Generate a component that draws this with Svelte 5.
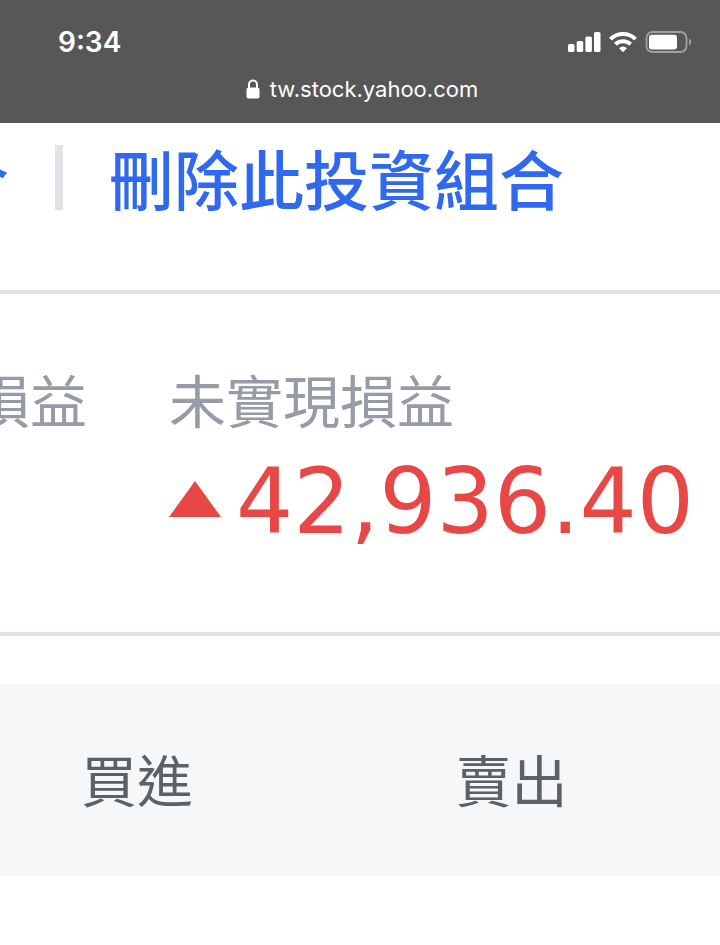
<script lang="ts">
  const time = '9:34';
  const host = 'tw.stock.yahoo.com';
  const unrealized = 42936.4;

  const formatAmount = (value: number): string =>
    value.toLocaleString('en-US', { minimumFractionDigits: 2, maximumFractionDigits: 2 });

  const columns = ['買進', '賣出'];
</script>

<header class="browser-bar">
  <div class="status-row">
    <span class="time">{time}</span>
    <div class="indicators">
      <svg width="34" height="22" viewBox="0 0 34 22" fill="#fff" aria-hidden="true">
        <rect x="1" y="13" width="6.5" height="8" rx="1.6" />
        <rect x="9.7" y="10" width="6.5" height="11" rx="1.6" />
        <rect x="18.4" y="5.5" width="6.5" height="15.5" rx="1.6" />
        <rect x="27" y="1" width="6.5" height="20" rx="1.6" />
      </svg>
      <svg width="28" height="22" viewBox="0 0 28 22" aria-hidden="true">
        <g fill="none" stroke="#fff" stroke-width="4">
          <path d="M1.5 8.1a18 18 0 0 1 25 0" />
          <path d="M6.4 13.2a11 11 0 0 1 15.2 0" />
        </g>
        <path d="M14 21.2l-4-4a5.8 5.8 0 0 1 8 0z" fill="#fff" />
      </svg>
      <svg width="47" height="22" viewBox="0 0 47 22" aria-hidden="true">
        <rect x="1.5" y="1" width="40" height="20" rx="6" fill="none" stroke="#a0a0a0" stroke-width="1.8" />
        <rect x="4" y="3.7" width="28" height="14.8" rx="3" fill="#fff" />
        <path d="M44 7.5c3 1.2 3 5.8 0 7z" fill="#a0a0a0" />
      </svg>
    </div>
  </div>
  <div class="address">
    <svg width="14" height="20" viewBox="0 0 14 20" aria-hidden="true">
      <path d="M3 9V5.5a4 4 0 0 1 8 0V9" fill="none" stroke="#fff" stroke-width="2" />
      <rect x="0.5" y="8.5" width="13" height="11" rx="2" fill="#fff" />
    </svg>
    <span>{host}</span>
  </div>
</header>

<main>
  <nav class="actions">
    <a class="clipped previous" href="#portfolio">合</a>
    <span class="separator"></span>
    <a href="#delete">刪除此投資組合</a>
  </nav>

  <section class="summary">
    <div class="clipped realized">損益</div>
    <div class="unrealized">
      <div>未實現損益</div>
      <div class="amount">
        <svg width="52" height="36" viewBox="0 0 52 36" aria-hidden="true">
          <path d="M26 0l26 36H0z" fill="currentColor" />
        </svg>
        <span>{formatAmount(unrealized)}</span>
      </div>
    </div>
  </section>

  <table>
    <thead>
      <tr>
        {#each columns as column}
          <th scope="col">{column}</th>
        {/each}
      </tr>
    </thead>
  </table>
</main>

<style>
  :global(body) {
    margin: 0;
    background: #fff;
    overflow-x: hidden;
  }

  .browser-bar {
    padding: 26px 28px 18px 58px;
    background: #575757;
    color: #fff;
    font-family: Inter, sans-serif;
  }

  .status-row {
    display: flex;
    justify-content: space-between;
    align-items: center;
    height: 32px;
  }

  .time {
    font-size: 28px;
    font-weight: 600;
    line-height: 32px;
  }

  .indicators {
    display: flex;
    align-items: center;
    gap: 8px;
  }

  .address {
    display: flex;
    justify-content: center;
    align-items: center;
    gap: 10px;
    margin-top: 15px;
    padding-right: 26px;
    font-size: 22px;
    line-height: 32px;
  }

  main {
    overflow: hidden;
    font-family: 'Noto Sans CJK TC', sans-serif;
  }

  .clipped {
    display: flex;
    justify-content: flex-end;
    flex-shrink: 0;
    overflow: hidden;
  }

  .actions {
    display: flex;
    align-items: center;
    padding: 10px 0 69px;
    border-bottom: 4px solid #e0e2e8;
    font-size: 65px;
    font-weight: 500;
    line-height: 88px;
    white-space: nowrap;
  }

  .actions a {
    color: #3069f0;
    text-decoration: none;
  }

  .previous {
    width: 9px;
  }

  .separator {
    width: 8px;
    height: 65px;
    margin: 0 46px;
    background: #e0e4e9;
  }

  .summary {
    display: flex;
    gap: 82px;
    padding: 64px 0 74px;
    border-bottom: 4px solid #e0e2e8;
    color: #979ba7;
    font-size: 57px;
    line-height: 80px;
    white-space: nowrap;
  }

  .realized {
    width: 87px;
  }

  .amount {
    display: flex;
    align-items: center;
    gap: 15px;
    margin-top: 8px;
    color: #e84845;
    font-family: 'DejaVu Sans', sans-serif;
    font-size: 90px;
    line-height: 112px;
  }

  .amount svg {
    margin-bottom: 6px;
  }

  table {
    width: 100%;
    margin: 48px 0;
    border-collapse: collapse;
    table-layout: fixed;
    background: #f5f7f9;
  }

  th {
    padding: 54px 0 58px 81px;
    color: #5b6165;
    font-size: 56px;
    font-weight: 400;
    line-height: 80px;
    text-align: left;
  }

  th:first-child {
    width: 52%;
    box-sizing: border-box;
  }
</style>
